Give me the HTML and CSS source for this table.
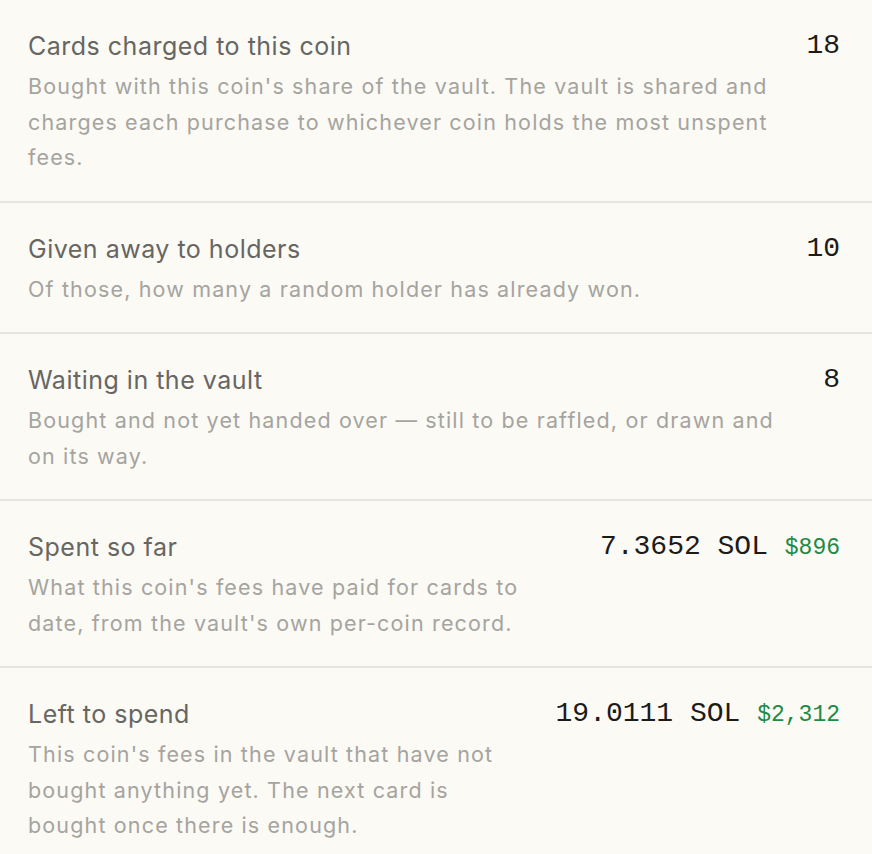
FILE: index.html
```html
<!DOCTYPE html>
<html lang="en">
<head>
    <meta charset="UTF-8">
    <meta name="viewport" content="width=device-width, initial-scale=1.0">
    <title>Coin vault</title>
    <link rel="stylesheet" href="styles.css">
</head>
<body>

    <!-- vault stats -->
    <div class="stat-list">
        <div class="stat-row first">
            <div class="stat-text">
                <div class="stat-label">Cards charged to this coin</div>
                <p class="stat-desc">Bought with this coin's share of the vault. The vault is shared and charges each purchase to whichever coin holds the most unspent fees.</p>
            </div>
            <div class="stat-value">18</div>
        </div>

        <div class="stat-row">
            <div class="stat-text">
                <div class="stat-label">Given away to holders</div>
                <p class="stat-desc">Of those, how many a random holder has already won.</p>
            </div>
            <div class="stat-value">10</div>
        </div>

        <div class="stat-row">
            <div class="stat-text">
                <div class="stat-label">Waiting in the vault</div>
                <p class="stat-desc">Bought and not yet handed over — still to be raffled, or drawn and on its way.</p>
            </div>
            <div class="stat-value">8</div>
        </div>

        <div class="stat-row">
            <div class="stat-text narrow">
                <div class="stat-label">Spent so far</div>
                <p class="stat-desc">What this coin's fees have paid for cards to date, from the vault's own per-coin record.</p>
            </div>
            <div class="stat-value">7.3652 SOL <span class="usd">$896</span></div>
        </div>

        <div class="stat-row">
            <div class="stat-text narrow">
                <div class="stat-label">Left to spend</div>
                <p class="stat-desc">This coin's fees in the vault that have not bought anything yet. The next card is bought once there is enough.</p>
            </div>
            <div class="stat-value">19.0111 SOL <span class="usd">$2,312</span></div>
        </div>
    </div>

</body>
</html>
```

FILE: styles.css
```css
body {
    margin: 0;
    background-color: #fbfaf5;
    font-family: Inter, "Noto Sans", sans-serif;
    color: #5f5e5a;
}

.stat-row {
    display: flex;
    justify-content: space-between;
    align-items: flex-start;
    gap: 24px;
    padding: 31px 32px 25px 28px;
    border-top: 2px solid #e7e5df;
}

.stat-row.first {
    padding-bottom: 25px;
    border-top: none;
}

.stat-text {
    max-width: 760px;
}

.stat-text.narrow {
    max-width: 500px;
}

.stat-label {
    font-size: 25px;
    line-height: 30px;
    letter-spacing: 0.5px;
    color: #676662;
}

.stat-desc {
    margin: 8px 0 0;
    font-size: 21.5px;
    line-height: 35.5px;
    letter-spacing: 1.15px;
    color: #a5a49f;
}

/* numbers on the right */
.stat-value {
    font-family: "Liberation Mono", monospace;
    font-size: 28px;
    line-height: 30px;
    color: #1b1b1a;
    white-space: nowrap;
}

.usd {
    font-size: 23px;
    color: #1f8a44;
}
```
